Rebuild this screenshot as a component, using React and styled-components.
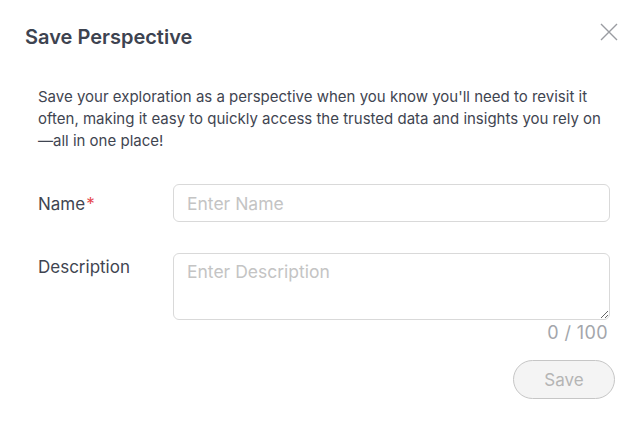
import React from "react";
import styled, { createGlobalStyle } from "styled-components";

const Global = createGlobalStyle`
  body {
    margin: 0;
    background: #ffffff;
    font-family: Inter, "Noto Sans", sans-serif;
  }
`;

function App() {
  return (
    <>
      <Global />
      <Dialog>
        <Header>
          <Title>Save Perspective</Title>
          <CloseButton aria-label="Close">
            <svg width="18" height="18" viewBox="0 0 18 18">
              <path d="M1 1L17 17M17 1L1 17" stroke="#9a9ca1" strokeWidth="1.4" />
            </svg>
          </CloseButton>
        </Header>

        <Body>
          <Intro>
            Save your exploration as a perspective when you know you'll need to revisit it
            often, making it easy to quickly access the trusted data and insights you rely on
            —all in one place!
          </Intro>

          <Field>
            <Label>
              Name<Required>*</Required>
            </Label>
            <Input placeholder="Enter Name" />
          </Field>

          <Field $top>
            <Label $top>Description</Label>
            <Column>
              <TextArea placeholder="Enter Description" />
              <Counter>0 / 100</Counter>
            </Column>
          </Field>
        </Body>

        <Footer>
          <SaveButton disabled>Save</SaveButton>
        </Footer>
      </Dialog>
    </>
  );
}

export default App;

const Dialog = styled.div`
  width: 639px;
  height: 421px;
  box-sizing: border-box;
  padding: 18px 24px 0 25px;
  color: #3f4551;
`;

const Header = styled.div`
  display: flex;
  align-items: flex-start;
  justify-content: space-between;
`;

const Title = styled.h2`
  margin: 1px 0 -1px;
  font-size: 20px;
  line-height: 36px;
  font-weight: 600;
  color: #3d4350;
`;

const CloseButton = styled.button`
  border: none;
  background: none;
  padding: 0;
  margin: 5px -3px 0 0;
  cursor: pointer;
  display: flex;
`;

const Body = styled.div`
  padding: 32px 5px 0 13px;
`;

const Intro = styled.p`
  margin: 0 0 32px;
  font-size: 15px;
  line-height: 22px;
  color: #3f4551;
`;

const Field = styled.div`
  display: grid;
  grid-template-columns: 135px 1fr;
  align-items: ${(p) => (p.$top ? "start" : "center")};
  margin-bottom: ${(p) => (p.$top ? "0" : "31px")};
`;

const Label = styled.label`
  font-size: 17px;
  line-height: 24px;
  color: #3f4551;
  padding-top: ${(p) => (p.$top ? "2px" : "2px")};
`;

const Required = styled.span`
  color: #e5484d;
  margin-left: 1px;
`;

const Input = styled.input`
  box-sizing: border-box;
  height: 38px;
  width: 100%;
  border: 1px solid #d9d9d9;
  border-radius: 6px;
  padding: 0 13px;
  font-family: inherit;
  font-size: 17.5px;
  color: #3f4551;
  outline: none;

  &::placeholder {
    color: #c4c4c4;
  }
`;

const Column = styled.div`
  display: flex;
  flex-direction: column;
  align-items: flex-end;
`;

const TextArea = styled.textarea`
  box-sizing: border-box;
  width: 100%;
  height: 67px;
  border: 1px solid #d9d9d9;
  border-radius: 6px;
  padding: 6px 13px;
  font-family: inherit;
  font-size: 17.5px;
  line-height: 24px;
  color: #3f4551;
  outline: none;
  resize: vertical;
  display: block;

  &::placeholder {
    color: #c4c4c4;
  }
`;

const Counter = styled.div`
  font-size: 18px;
  line-height: 24px;
  letter-spacing: 0.4px;
  color: #a3a6ab;
  margin-top: 1px;
  padding-right: 2px;
`;

const Footer = styled.div`
  display: flex;
  justify-content: flex-end;
  margin-top: 15px;
`;

const SaveButton = styled.button`
  width: 102px;
  height: 39px;
  border-radius: 20px;
  border: 1px solid #c6c6c6;
  background: #f4f4f4;
  color: #b5b5b5;
  font-family: inherit;
  font-size: 17px;
  cursor: not-allowed;
`;
